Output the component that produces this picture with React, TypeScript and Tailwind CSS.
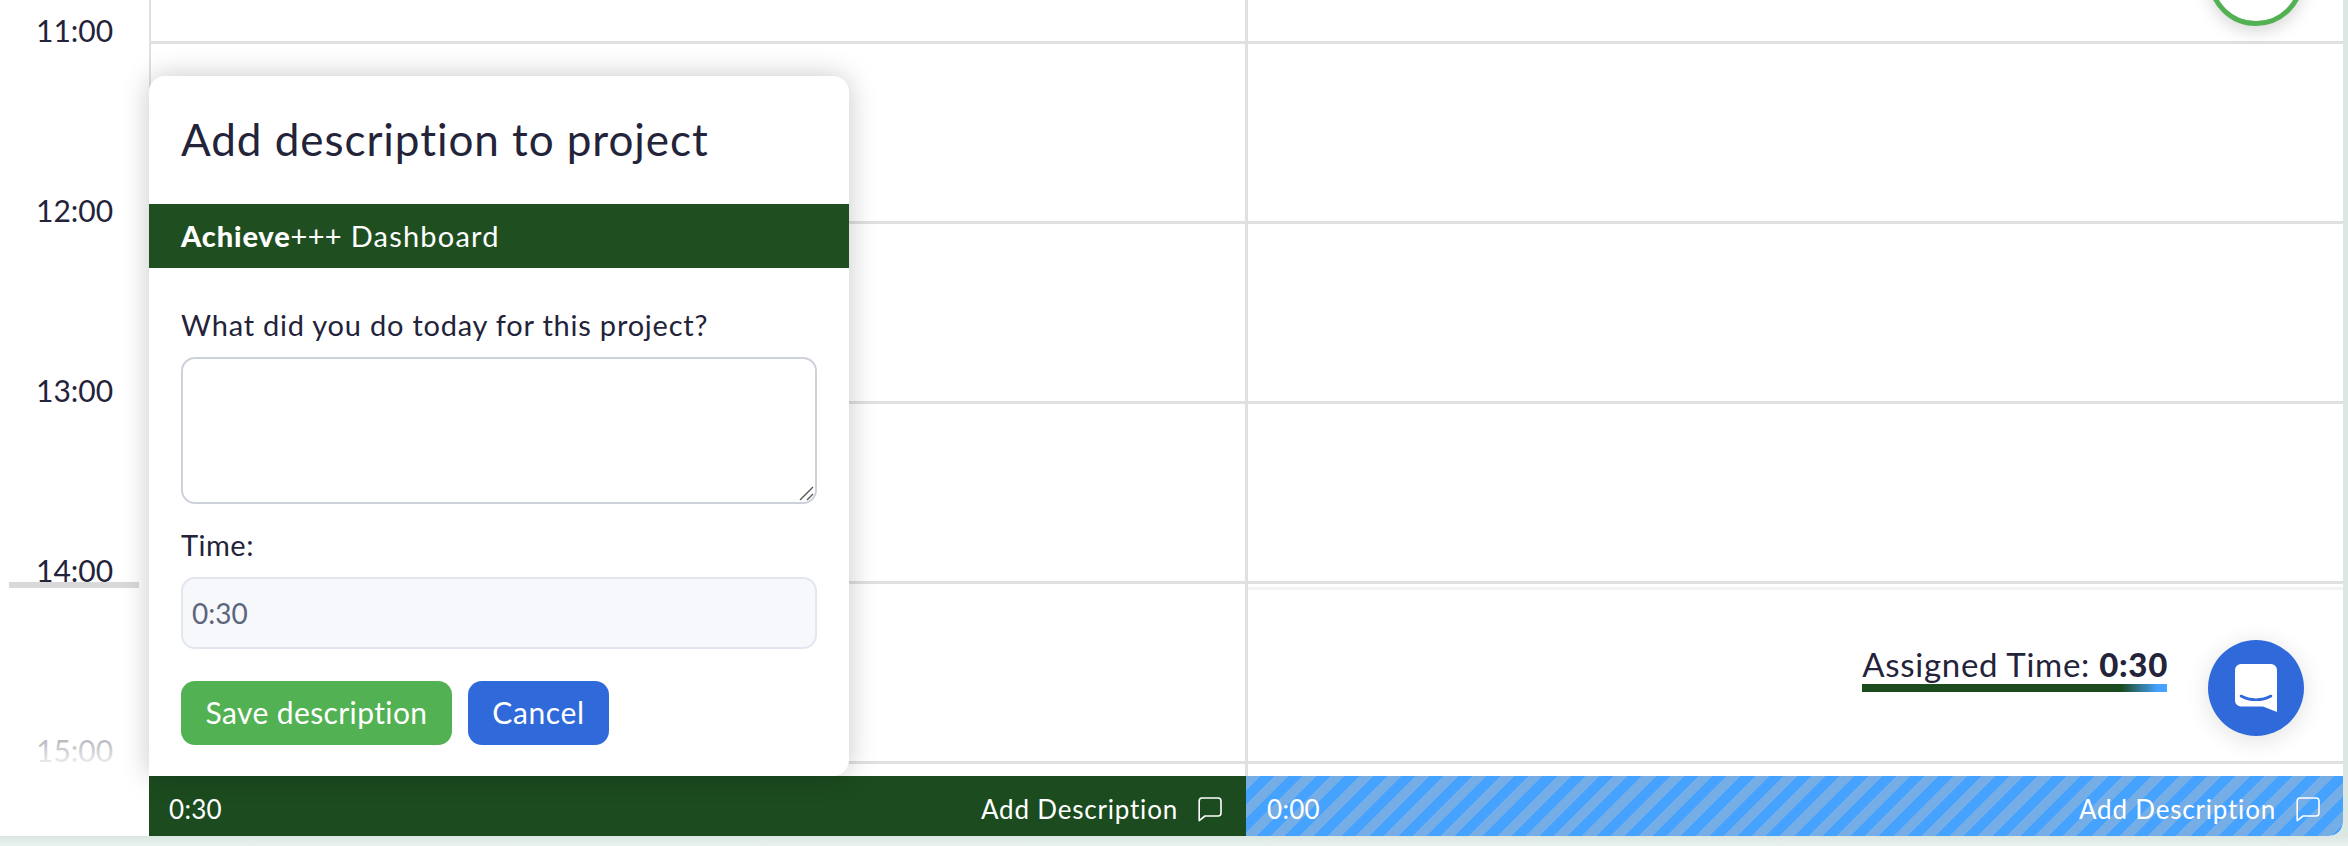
import React from 'react';

const hours = ['11:00', '12:00', '13:00', '14:00', '15:00'];

function CommentIcon() {
  return (
    <svg width="24" height="25" viewBox="0 0 24 25" fill="none" stroke="currentColor" strokeWidth="1.6" className="shrink-0">
      <path d="M4 1h16a3 3 0 0 1 3 3v12a3 3 0 0 1-3 3H7l-5.8 4.6V4a3 3 0 0 1 2.8-3z" strokeLinejoin="round" />
    </svg>
  );
}

function ChatLogo() {
  return (
    <svg width="42" height="48" viewBox="0 0 42 48">
      <path d="M6 0h30a6 6 0 0 1 6 6v42l-14-5.5H6a6 6 0 0 1-6-6V6a6 6 0 0 1 6-6z" fill="#ffffff" />
      <path d="M6 32c9 5 21 5 30 0" fill="none" stroke="#3069d9" strokeWidth="2.6" strokeLinecap="round" />
    </svg>
  );
}

function DayFooter({ time, striped }: { time: string; striped?: boolean }) {
  return (
    <div
      className={
        striped
          ? 'flex-1 flex items-center justify-between pl-[21px] pr-[23px] pt-[6px] text-white bg-[repeating-linear-gradient(135deg,#75ade6_0,#75ade6_10px,#45a2ff_10px,#45a2ff_20px)] rounded-br-[14px]'
          : 'w-[1097px] flex items-center justify-between pl-[20px] pr-[24px] pt-[6px] text-white bg-[#1c4b1f]'
      }
    >
      <span className="text-[26px] tracking-[0.3px]">{time}</span>
      <span className="flex items-center gap-[20px] text-[26px] tracking-[0.8px]">
        Add Description
        <CommentIcon />
      </span>
    </div>
  );
}

function HourRow({ height = 'h-[180px]' }: { height?: string }) {
  return (
    <div className={`grid grid-cols-[1097px_1fr] border-b-[3px] border-[#e0e0e0] ${height}`}>
      <div className="border-r-[3px] border-[#e0e0e0]" />
      <div />
    </div>
  );
}

export default function App() {
  return (
    <div className="relative h-[846px] w-[2348px] overflow-hidden bg-[linear-gradient(180deg,#dbe7e2_836px,#eaf2ef_846px)] font-['Lato',sans-serif] text-[#23233a]">
      <div className="flex h-[836px] w-[2343px] overflow-hidden rounded-br-[14px] bg-white">
        {/* Hour labels */}
        <div className="relative w-[149px] shrink-0 pt-[9px]">
          {hours.map((h) => (
            <div key={h} className="h-[180px] pl-[36px] text-[30px] leading-[42px]">
              {h}
            </div>
          ))}
          <div className="absolute left-[9px] top-[582px] h-[6px] w-[130px] bg-[#d9d9d9]" />
          <div className="absolute left-0 right-0 top-[732px] h-[40px] bg-gradient-to-b from-white/60 to-white" />
        </div>

        {/* Calendar */}
        <div className="flex min-w-0 flex-1 flex-col">
          <div className="flex min-h-0 flex-1 flex-col overflow-hidden border-l-2 border-[#e0e0e0]">
            <HourRow height="h-[44px]" />
            <HourRow />
            <HourRow />
            <HourRow />
            <div className="grid h-[180px] grid-cols-[1097px_1fr] border-b-[3px] border-[#e0e0e0]">
              <div className="border-r-[3px] border-[#e0e0e0]" />
              <div className="mt-[3px] flex flex-col items-end border-t-[3px] border-[#f3f3f3] pr-[175px] pt-[54px]">
                <div>
                  <div className="text-[33px] leading-[40px] tracking-[0.7px]">
                    Assigned Time: <b className="font-black">0:30</b>
                  </div>
                  <div className="h-[8px] w-[305px] bg-[linear-gradient(90deg,#1c4b1f_85%,#45a2ff_97%)]" />
                </div>
              </div>
            </div>
            <div className="grid min-h-0 flex-1 grid-cols-[1097px_1fr]">
              <div className="border-r-[3px] border-[#e0e0e0]" />
              <div />
            </div>
          </div>
          <div className="flex h-[60px] shrink-0">
            <DayFooter time="0:30" />
            <DayFooter time="0:00" striped />
          </div>
        </div>
      </div>

      {/* Popover over the first day */}
      <div className="absolute left-[149px] top-[76px] h-[700px] w-[700px] rounded-[16px] rounded-bl-none bg-white shadow-[0_0_28px_rgba(0,0,0,0.22)]">
        <h2 className="flex h-[128px] items-center pb-[2px] pl-[32px] text-[44px] font-normal tracking-[0.95px]">Add description to project</h2>
        <div className="flex h-[64px] items-center bg-[#1f4f20] pl-[32px] text-[29px] text-white">
          <b className="font-black tracking-[0.85px]">Achieve</b>
          <span className="tracking-[0.2px]">+++</span>
          <span className="ml-[9px] tracking-[1.2px]">Dashboard</span>
        </div>
        <div className="flex flex-col px-[32px] pt-[37px]">
          <label className="text-[29px] leading-[40px] tracking-[0.78px]">What did you do today for this project?</label>
          <div className="relative mt-[12px] h-[147px]">
            <textarea className="h-full w-full resize-none rounded-[14px] border-2 border-[#cdd1da] bg-white" />
            <svg width="16" height="16" viewBox="0 0 16 16" className="absolute bottom-[3px] right-[3px] text-[#555555]" stroke="currentColor" strokeWidth="1.4">
              <path d="M2 15 15 2M9 15l6-6" />
            </svg>
          </div>
          <label className="mt-[21px] text-[29px] leading-[40px] tracking-[0.5px]">Time:</label>
          <div className="mt-[12px] flex h-[72px] items-center rounded-[14px] border-2 border-[#e3e6ef] bg-[#f7f8fc] pl-[9px] text-[28px] text-[#5b657c]">
            0:30
          </div>
          <div className="mt-[32px] flex gap-[16px]">
            <button className="h-[64px] w-[271px] rounded-[14px] bg-[#52b152] pb-[2px] text-[30px] tracking-[0.4px] text-white">Save description</button>
            <button className="h-[64px] w-[141px] rounded-[14px] bg-[#3069d9] pb-[2px] text-[30px] tracking-[0.6px] text-white">Cancel</button>
          </div>
        </div>
      </div>

      {/* Floating buttons */}
      <div className="absolute left-[2208px] top-[-70px] h-[96px] w-[96px] rounded-full border-[5px] border-[#52b152] bg-white shadow-[0_6px_16px_rgba(0,0,0,0.15)]" />
      <div className="absolute left-[2208px] top-[640px] flex h-[96px] w-[96px] items-center justify-center rounded-full bg-[#3069d9] shadow-[0_4px_24px_rgba(0,0,0,0.12)]">
        <ChatLogo />
      </div>
    </div>
  );
}
